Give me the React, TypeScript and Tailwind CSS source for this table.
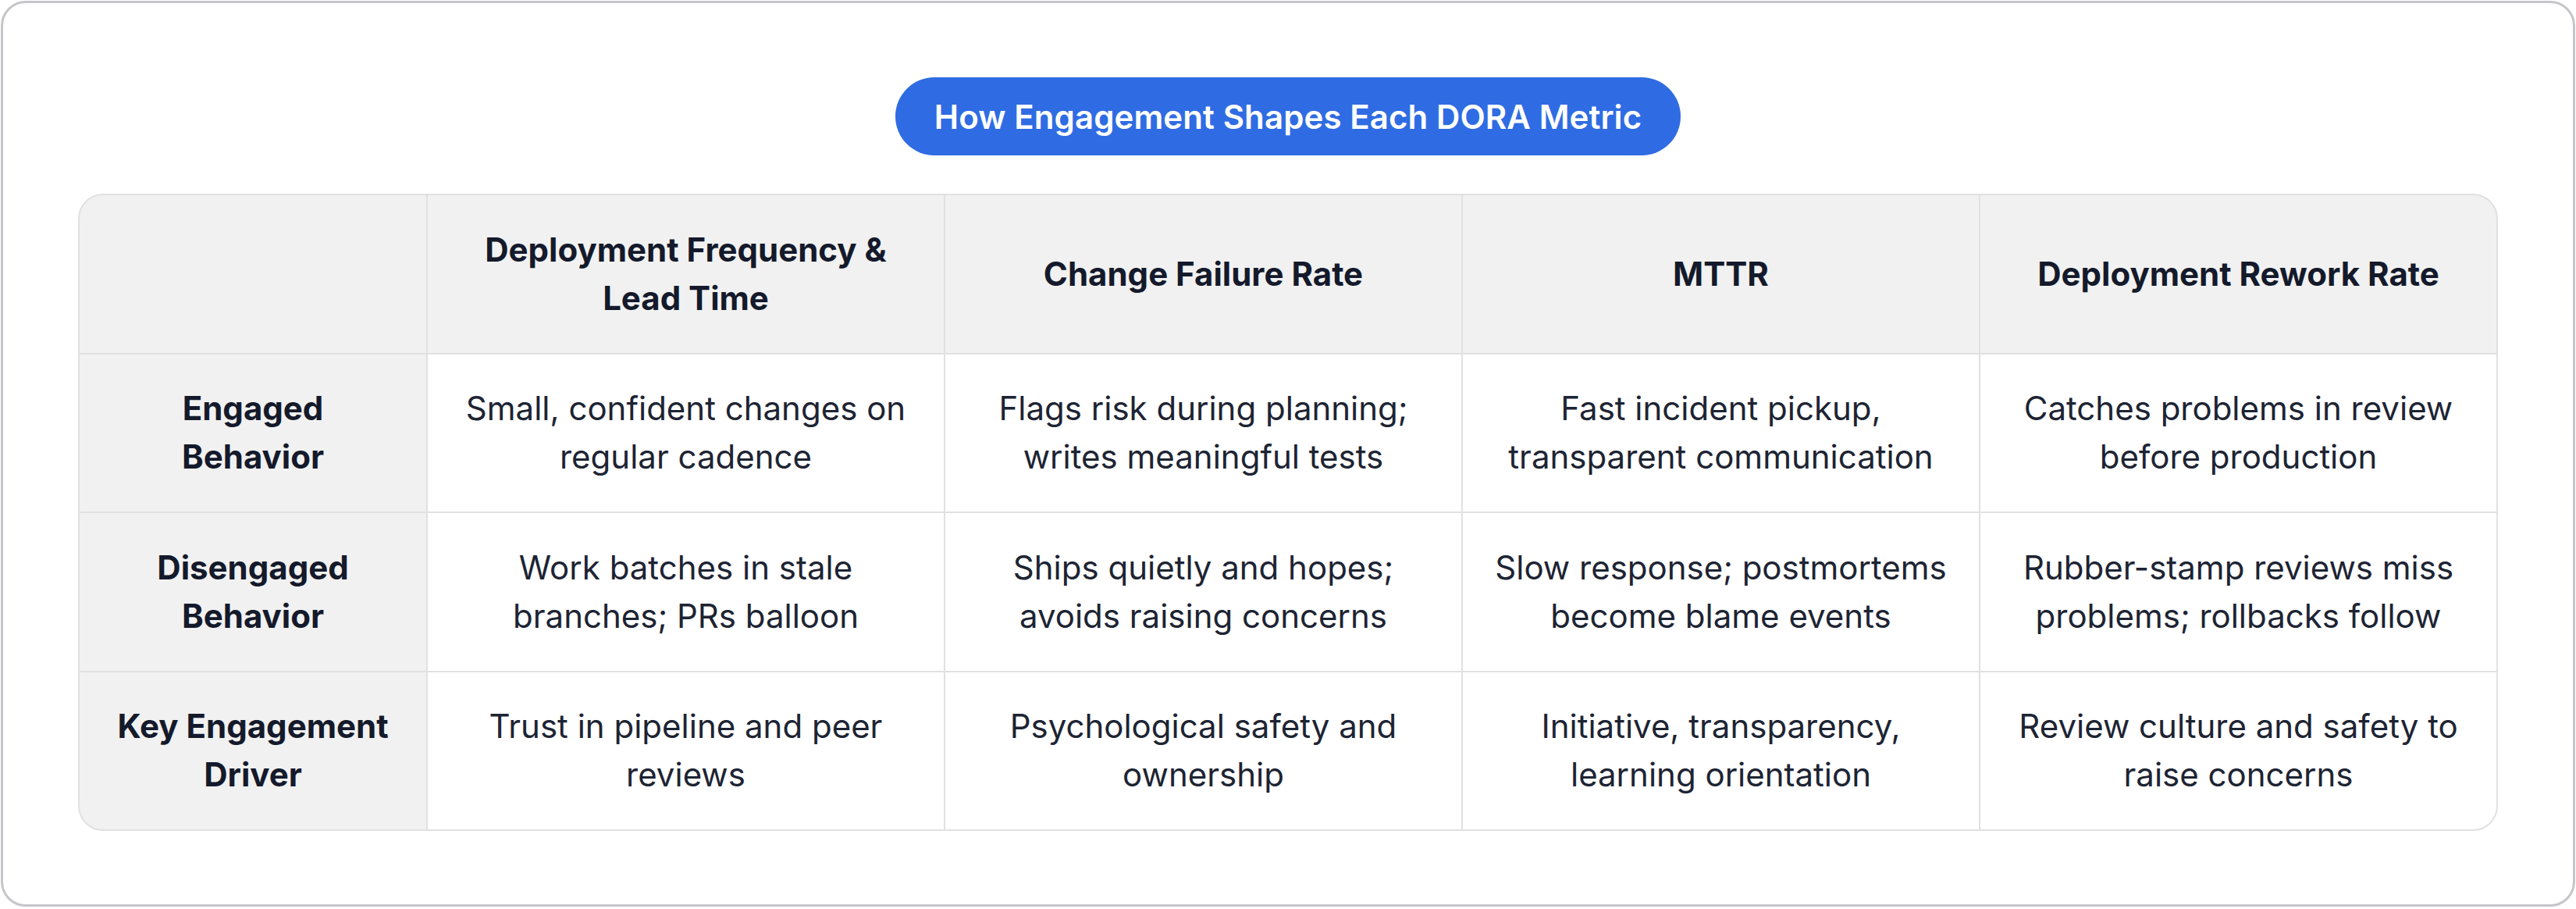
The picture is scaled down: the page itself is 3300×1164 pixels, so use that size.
const columns = [
  "Deployment Frequency & Lead Time",
  "Change Failure Rate",
  "MTTR",
  "Deployment Rework Rate",
]

const rows = [
  {
    label: "Engaged Behavior",
    cells: [
      "Small, confident changes on regular cadence",
      "Flags risk during planning; writes meaningful tests",
      "Fast incident pickup, transparent communication",
      "Catches problems in review before production",
    ],
  },
  {
    label: "Disengaged Behavior",
    cells: [
      "Work batches in stale branches; PRs balloon",
      "Ships quietly and hopes; avoids raising concerns",
      "Slow response; postmortems become blame events",
      "Rubber-stamp reviews miss problems; rollbacks follow",
    ],
  },
  {
    label: "Key Engagement Driver",
    cells: [
      "Trust in pipeline and peer reviews",
      "Psychological safety and ownership",
      "Initiative, transparency, learning orientation",
      "Review culture and safety to raise concerns",
    ],
  },
]

export default function App() {
  return (
    <div className="w-[3300px] h-[1164px] bg-white p-px font-['Inter',sans-serif]">
      <div className="h-[1160px] rounded-[32px] border-[3px] border-[#c6c6ca] bg-white flex flex-col items-center pt-[95px] px-[96px]">
        <div className="h-[100px] rounded-full bg-[#2f6ce3] px-[50px] flex items-center text-white text-[42px] font-semibold tracking-[0.1px]">
          How Engagement Shapes Each DORA Metric
        </div>

        <div className="mt-[49px] w-full rounded-[32px] border-2 border-[#e1e1e3] overflow-hidden bg-[#e1e1e3] grid grid-cols-[444px_repeat(4,1fr)] gap-[2px] text-center text-[42px] leading-[62px]">
          <div className="bg-[#f1f1f1]" />
          {columns.map((c) => (
            <div key={c} className="bg-[#f1f1f1] px-[34px] py-[38.75px] flex items-center justify-center font-bold text-[#141a2b]">
              {c}
            </div>
          ))}

          {rows.map((r) => (
            <>
              <div key={r.label} className="bg-[#f1f1f1] px-[44px] py-[38.75px] flex items-center justify-center font-bold text-[#141a2b]">
                {r.label}
              </div>
              {r.cells.map((t) => (
                <div key={t} className="bg-white px-[34px] py-[38.75px] flex items-center justify-center text-[#1d2433]">
                  {t}
                </div>
              ))}
            </>
          ))}
        </div>
      </div>
    </div>
  )
}
